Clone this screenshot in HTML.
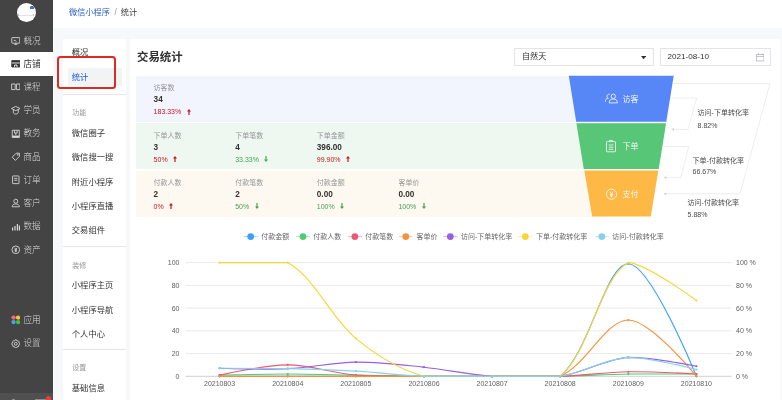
<!DOCTYPE html>
<html lang="zh-CN">
<head>
<meta charset="utf-8">
<title>统计</title>
<style>
*{box-sizing:border-box;margin:0;padding:0}
html,body{width:782px;height:400px;overflow:hidden;background:#f7f8fa;font-family:"Liberation Sans","Noto Sans CJK SC",sans-serif;color:#323233}
.abs,.sact,.sic,.stx,.mact,.mi,.mg,.mdiv,.row,.lab,.val,.pct{position:absolute}
#root{position:absolute;left:0;top:0;width:782px;height:400px;overflow:hidden;will-change:transform;transform:translateZ(0)}
#side{position:absolute;left:0;top:0;width:53px;height:400px;background:#444}
#sidebot{position:absolute;left:0;top:393px;width:53px;height:7px;background:#505050}
.logo{position:absolute;left:17.1px;top:3.1px;width:19px;height:19px;border-radius:50%;background:#fff;overflow:hidden}
.sact{left:0;width:53px;height:23.8px;background:#fff}
.sic{left:10.8px;width:9.6px;height:9.6px}
.stx{font-weight:300;left:23.5px;font-size:8.6px;line-height:14px;white-space:nowrap}
#head{position:absolute;left:53px;top:0;width:729px;height:27.5px;background:#fff}
.bc{position:absolute;top:6.2px;font-size:8.2px;line-height:14px;white-space:nowrap}
#sub{position:absolute;left:63px;top:38.5px;width:63px;height:362px;background:#fff}
#sub *{}
.mact{left:68px;width:54px;height:17.4px;background:#f2f3f5}
.mi{left:71.8px;font-size:8.3px;line-height:14px;white-space:nowrap;color:#323233}
.mg{left:72.3px;font-size:7px;line-height:12px;color:#969799;white-space:nowrap}
.mdiv{left:63px;width:63px;height:0.7px;background:#e6e7e9}
#main{position:absolute;left:130px;top:38.5px;width:649.5px;height:362px;background:#fff}
.title{position:absolute;left:137px;top:48.500px;font-size:11.4px;font-weight:bold;line-height:17px;color:#323233;white-space:nowrap}
.inp{position:absolute;top:48.300px;height:18px;border:1px solid #e2e4e7;background:#fff;font-size:8.1px;line-height:16.6px;color:#323233;white-space:nowrap}
.row{left:135.7px;width:470px;height:46px}
.lab{font-size:7px;line-height:10px;color:#969799;white-space:nowrap}
.val{font-size:8.2px;line-height:11px;font-weight:bold;color:#323233;white-space:nowrap}
.pct{font-size:7px;line-height:10px;white-space:nowrap}
.ar{margin-left:5.5px;vertical-align:-0.3px}
svg text.ax{font-size:7px;fill:#606060;font-family:"Liberation Sans",sans-serif}
svg text.lg{font-size:7px;fill:#686868;font-family:"Liberation Sans","Noto Sans CJK SC",sans-serif}
svg text.fl{font-size:8px;fill:#fff;fill-opacity:0.93;font-family:"Liberation Sans","Noto Sans CJK SC",sans-serif}
svg text.cv{font-size:7px;fill:#4a4a4a;font-family:"Liberation Sans","Noto Sans CJK SC",sans-serif}
#redbox{position:absolute;left:57px;top:56.2px;width:59.4px;height:32.6px;border:2.2px solid #df2a22;border-radius:3.5px}
</style>
</head>
<body>
<div id="root">
<div id="head">
  <div class="bc" style="left:16px;color:#2b62c9">微信小程序</div>
  <div class="bc" style="left:61.500px;color:#969799">/</div>
  <div class="bc" style="left:67.800px;color:#3a3a3c">统计</div>
</div>
<div id="side">
  <div class="logo"><div style="position:absolute;left:12.600px;top:2.800px;width:4.600px;height:2.800px;background:#3f6fcf;border-radius:1.200px 1.200px 0.500px 0.500px"></div><div style="position:absolute;left:1.500px;top:11.600px;width:15.500px;height:0.800px;background:#dfe4ee"></div><div style="position:absolute;left:1.200px;top:11.200px;width:1.200px;height:1.500px;background:#a9c0ea"></div><div style="position:absolute;left:16.200px;top:11.200px;width:1.200px;height:1.500px;background:#a9c0ea"></div></div>
  <svg class="sic" style="top:35.8px;color:#dadada" viewBox="0 0 12 12" fill="none" stroke="currentColor" stroke-width="1.1"><rect x="1" y="2" width="10" height="7" rx="0.6"/><path d="M4 11h4M6 9v2M3.5 5.5h2l1 1.5"/></svg>
<div class="stx" style="top:33.5px;color:#dadada">概况</div>
<div class="sact" style="top:51.8px"></div>
<svg class="sic" style="top:59.0px;color:#323233" viewBox="0 0 12 12" fill="none" stroke="currentColor" stroke-width="1.1"><path d="M1 2h10v8H1z" fill="currentColor"/><path d="M1 5h10" stroke="#fff"/><path d="M4.5 10V7.5h3V10" stroke="#fff"/></svg>
<div class="stx" style="top:56.7px;color:#323233;font-weight:400">店铺</div>
<svg class="sic" style="top:82.3px;color:#dadada" viewBox="0 0 12 12" fill="none" stroke="currentColor" stroke-width="1.1"><path d="M0.8 2.5h4.4v7H0.8zM6.8 2.5h4.4v7H6.8z"/></svg>
<div class="stx" style="top:80.0px;color:#dadada">课程</div>
<svg class="sic" style="top:105.3px;color:#dadada" viewBox="0 0 12 12" fill="none" stroke="currentColor" stroke-width="1.1"><path d="M6 1.800L11.400 4.400 6 7 0.600 4.400zM2.900 5.700v3.500c0 1.200 1.400 2.100 3.100 2.100s3.100-0.900 3.100-2.100V5.700"/></svg>
<div class="stx" style="top:103.0px;color:#dadada">学员</div>
<svg class="sic" style="top:128.7px;color:#dadada" viewBox="0 0 12 12" fill="none" stroke="currentColor" stroke-width="1.1"><path d="M1.600 1.600h8.800v9h-8.800zM4.300 1.600v3.400h3.400V1.600M6 5v2.500"/><path d="M1.600 9.200h8.800" stroke-width="2"/></svg>
<div class="stx" style="top:126.4px;color:#dadada">教务</div>
<svg class="sic" style="top:151.9px;color:#dadada" viewBox="0 0 12 12" fill="none" stroke="currentColor" stroke-width="1.1"><path d="M6.500 1.500h4v4L5.500 10.500 1.500 6.500z"/><circle cx="8.500" cy="3.500" r="0.600"/></svg>
<div class="stx" style="top:149.6px;color:#dadada">商品</div>
<svg class="sic" style="top:175.3px;color:#dadada" viewBox="0 0 12 12" fill="none" stroke="currentColor" stroke-width="1.1"><rect x="2" y="1.200" width="8" height="9.600" rx="0.500"/><path d="M4 4.200h4M4 6.500h4"/></svg>
<div class="stx" style="top:173.0px;color:#dadada">订单</div>
<svg class="sic" style="top:198.3px;color:#dadada" viewBox="0 0 12 12" fill="none" stroke="currentColor" stroke-width="1.1"><circle cx="6" cy="4" r="2.500"/><path d="M1.500 11c0-2.500 2-3.500 4.500-3.500s4.500 1 4.500 3.500z"/></svg>
<div class="stx" style="top:196.0px;color:#dadada">客户</div>
<svg class="sic" style="top:221.6px;color:#dadada" viewBox="0 0 12 12" fill="none" stroke="currentColor" stroke-width="1.1"><path d="M2 10.500V7M5 10.500V5M8 10.500V2.500M10.500 10.500V4.500" stroke-width="1.500"/></svg>
<div class="stx" style="top:219.3px;color:#dadada">数据</div>
<svg class="sic" style="top:244.8px;color:#dadada" viewBox="0 0 12 12" fill="none" stroke="currentColor" stroke-width="1.1"><circle cx="6" cy="6" r="4.800"/><path d="M4.500 3.500L6 5.500 7.500 3.500M6 5.500V9M4.500 6h3M4.500 7.500h3"/></svg>
<div class="stx" style="top:242.5px;color:#dadada">资产</div>
<svg class="sic" style="top:315.3px" viewBox="0 0 12 12"><circle cx="3.200" cy="3.200" r="2.700" fill="#f2687a"/><circle cx="8.800" cy="3.200" r="2.700" fill="#f7c43a"/><circle cx="3.200" cy="8.800" r="2.700" fill="#4fa2ea"/><circle cx="8.800" cy="8.800" r="2.700" fill="#3cc53f"/></svg>
<div class="stx" style="top:313.0px;color:#dadada">应用</div>
<svg class="sic" style="top:338.6px;color:#dadada" viewBox="0 0 12 12" fill="none" stroke="currentColor" stroke-width="1.1"><circle cx="6" cy="6" r="1.800"/><path d="M6 1l1.200 0.300 0.500 1.200 1.300-0.200 0.900 0.900-0.200 1.300 1.200 0.500L11 6l-0.300 1.200-1.200 0.500 0.200 1.300-0.900 0.900-1.300-0.200-0.500 1.200L6 11l-1.200-0.300-0.500-1.200-1.300 0.200-0.900-0.900 0.200-1.300-1.200-0.500L1 6l0.300-1.200 1.200-0.500-0.200-1.300 0.900-0.900 1.300 0.200 0.500-1.200z"/></svg>
<div class="stx" style="top:336.3px;color:#dadada">设置</div>
  <div id="sidebot"></div>
  <div style="position:absolute;left:11.500px;top:399px;width:3px;height:2px;border-radius:1px;background:#9a9a9a"></div>
  <div style="position:absolute;left:35px;top:398.800px;width:11px;height:2px;background:#8c8c8c"></div>
  <div style="position:absolute;left:45.500px;top:395.800px;width:5px;height:5px;border-radius:50%;background:#ee3b3b"></div>
</div>
<div id="sub"></div>
<div class="mi" style="top:45.0px">概况</div>
<div class="mact" style="top:68.3px"></div>
<div class="mi" style="top:70.0px;color:#155bd4">统计</div>
<div class="mg" style="top:107.0px">功能</div>
<div class="mi" style="top:125.5px">微信圈子</div>
<div class="mi" style="top:150.3px">微信搜一搜</div>
<div class="mi" style="top:174.5px">附近小程序</div>
<div class="mi" style="top:198.7px">小程序直播</div>
<div class="mi" style="top:223.0px">交易组件</div>
<div class="mg" style="top:260.0px">装修</div>
<div class="mi" style="top:278.0px">小程序主页</div>
<div class="mi" style="top:302.5px">小程序导航</div>
<div class="mi" style="top:327.0px">个人中心</div>
<div class="mg" style="top:362.0px">设置</div>
<div class="mi" style="top:381.0px">基础信息</div>
<div class="mdiv" style="top:93.7px"></div>
<div class="mdiv" style="top:246.3px"></div>
<div class="mdiv" style="top:349.3px"></div>
<div id="main"></div>
<div class="title">交易统计</div>
<div class="inp" style="left:514px;width:140px;padding-left:7px">自然天<svg style="position:absolute;right:6.800px;top:6.800px" width="5.200" height="3.400" viewBox="0 0 6 4"><path d="M0 0h6L3 4z" fill="#323233"/></svg></div>
<div class="inp" style="left:660px;width:110.800px;padding-left:6.500px">2021-08-10<svg style="position:absolute;right:5.400px;top:4px" width="8.600" height="8.600" viewBox="0 0 8 8" fill="none" stroke="#aeb0b3" stroke-width="0.700"><rect x="0.600" y="1.300" width="6.800" height="6.100"/><path d="M0.600 3.300h6.800M2.300 0.300v1.800M5.700 0.300v1.800"/></svg></div>
<div class="row" style="top:75.7px;background:#f2f5fe"></div>
<div class="lab" style="left:153.6px;top:83.3px">访客数</div>
<div class="val" style="left:153.6px;top:94.1px">34</div>
<div class="pct" style="left:153.6px;top:107.3px;color:#c8141c">183.33%<svg class="ar" width="4" height="6" viewBox="0 0 4 6"><path d="M2 0L4 2.4H2.600V6H1.400V2.400H0z" fill="#c8141c"/></svg></div>
<div class="row" style="top:123.2px;background:#eff8f0"></div>
<div class="lab" style="left:153.6px;top:130.8px">下单人数</div>
<div class="val" style="left:153.6px;top:141.6px">3</div>
<div class="pct" style="left:153.6px;top:154.8px;color:#c8141c">50%<svg class="ar" width="4" height="6" viewBox="0 0 4 6"><path d="M2 0L4 2.4H2.600V6H1.400V2.400H0z" fill="#c8141c"/></svg></div>
<div class="lab" style="left:235.2px;top:130.8px">下单笔数</div>
<div class="val" style="left:235.2px;top:141.6px">4</div>
<div class="pct" style="left:235.2px;top:154.8px;color:#46a158">33.33%<svg class="ar" width="4" height="6" viewBox="0 0 4 6"><path d="M2 6L4 3.600H2.600V0H1.400V3.600H0z" fill="#46a158"/></svg></div>
<div class="lab" style="left:316.8px;top:130.8px">下单金额</div>
<div class="val" style="left:316.8px;top:141.6px">396.00</div>
<div class="pct" style="left:316.8px;top:154.8px;color:#c8141c">99.90%<svg class="ar" width="4" height="6" viewBox="0 0 4 6"><path d="M2 0L4 2.4H2.600V6H1.400V2.400H0z" fill="#c8141c"/></svg></div>
<div class="row" style="top:170.6px;background:#fef9f0"></div>
<div class="lab" style="left:153.6px;top:178.2px">付款人数</div>
<div class="val" style="left:153.6px;top:189.0px">2</div>
<div class="pct" style="left:153.6px;top:202.2px;color:#c8141c">0%<svg class="ar" width="4" height="6" viewBox="0 0 4 6"><path d="M2 0L4 2.4H2.600V6H1.400V2.400H0z" fill="#c8141c"/></svg></div>
<div class="lab" style="left:235.2px;top:178.2px">付款笔数</div>
<div class="val" style="left:235.2px;top:189.0px">2</div>
<div class="pct" style="left:235.2px;top:202.2px;color:#46a158">50%<svg class="ar" width="4" height="6" viewBox="0 0 4 6"><path d="M2 6L4 3.600H2.600V0H1.400V3.600H0z" fill="#46a158"/></svg></div>
<div class="lab" style="left:316.8px;top:178.2px">付款金额</div>
<div class="val" style="left:316.8px;top:189.0px">0.00</div>
<div class="pct" style="left:316.8px;top:202.2px;color:#46a158">100%<svg class="ar" width="4" height="6" viewBox="0 0 4 6"><path d="M2 6L4 3.600H2.600V0H1.400V3.600H0z" fill="#46a158"/></svg></div>
<div class="lab" style="left:398.4px;top:178.2px">客单价</div>
<div class="val" style="left:398.4px;top:189.0px">0.00</div>
<div class="pct" style="left:398.4px;top:202.2px;color:#46a158">100%<svg class="ar" width="4" height="6" viewBox="0 0 4 6"><path d="M2 6L4 3.600H2.600V0H1.400V3.600H0z" fill="#46a158"/></svg></div>
<svg class="abs" style="left:0;top:0" width="782" height="400" viewBox="0 0 782 400">
<!-- funnel -->
<polygon points="568.8,75.700 673.700,75.700 666.300,121.800 576.200,121.800" fill="#5786f7"/>
<polygon points="576.400,123.200 666.100,123.200 658.700,169 583.800,169" fill="#57c676"/>
<polygon points="584.300,170.600 658.300,170.600 650.800,216.600 592.200,216.600" fill="#feb846"/>
<g fill="none" stroke="#fff" stroke-width="0.85" stroke-opacity="0.92">
  <circle cx="613.3" cy="96.3" r="2.2"/><path d="M609.2 102.900c0-2.700 1.600-3.900 4.100-3.900s4.100 1.200 4.100 3.900z"/>
  <path d="M609.700 94.200c-1.700-0.200-2.700 0.900-2.700 2.200 0 1.100 0.700 1.900 1.600 2.200M605.300 101.700c0-1.900 0.900-3 2.600-3.400"/>
  <rect x="606.500" y="141.600" width="9" height="10.200" rx="0.700"/><path d="M609.400 141.600v-1.200h3.200v1.200M608.700 145h4.600M608.700 147.200h4.600M608.700 149.300h4.600"/>
  <circle cx="611.500" cy="194.200" r="5.100"/><path d="M609.700 191.500l1.800 2.500 1.800-2.500M611.500 194v3.300M609.900 194.500h3.200M609.900 195.900h3.200"/>
</g>
<text x="622.500" y="101.500" class="fl">访客</text>
<text x="622.500" y="149.400" class="fl">下单</text>
<text x="622.500" y="197.100" class="fl">支付</text>
<!-- connectors -->
<g fill="none" stroke="#e3e5e8" stroke-width="0.700">
  <path d="M672.300 83.600H770L740 193.800H664"/>
  <path d="M670 98H696.600L688 129.400H672"/>
  <path d="M662.500 146.500H688.700L680.800 177.600H664.300"/>
</g>
<g fill="#d4d6d9">
  <path d="M663.300 193.800l3-1.400v2.800z"/><path d="M671 129.400l3-1.400v2.800z"/><path d="M663.300 177.600l3-1.400v2.800z"/>
</g>
<text x="697.600" y="115.200" class="cv">访问-下单转化率</text>
<text x="697.600" y="127.500" class="cv">8.82%</text>
<text x="692.600" y="162.600" class="cv">下单-付款转化率</text>
<text x="692.600" y="174.400" class="cv">66.67%</text>
<text x="687.600" y="205" class="cv">访问-付款转化率</text>
<text x="687.600" y="216.800" class="cv">5.88%</text>
<line x1="185.5" x2="731.5" y1="353.56" y2="353.56" stroke="#e5e5e5" stroke-width="0.8"/>
<line x1="185.5" x2="731.5" y1="330.82" y2="330.82" stroke="#e5e5e5" stroke-width="0.8"/>
<line x1="185.5" x2="731.5" y1="308.08" y2="308.08" stroke="#e5e5e5" stroke-width="0.8"/>
<line x1="185.5" x2="731.5" y1="285.34" y2="285.34" stroke="#e5e5e5" stroke-width="0.8"/>
<line x1="185.5" x2="731.5" y1="262.60" y2="262.60" stroke="#e5e5e5" stroke-width="0.8"/>
<line x1="185.5" x2="731.5" y1="376.30" y2="376.30" stroke="#c4c4c4" stroke-width="0.8"/>
<path d="M219.60 376.30 C219.60 376.30 265.24 376.30 287.72 376.30 C310.20 376.30 333.36 376.30 355.84 376.30 C378.32 376.30 401.48 376.30 423.96 376.30 C446.44 376.30 469.60 376.30 492.08 376.30 C514.56 376.30 544.86 376.30 560.20 376.30 C589.82 351.83 605.84 263.74 628.32 263.74 C650.80 263.74 696.44 376.30 696.44 376.30" fill="none" stroke="#3ba0ff" stroke-width="1.15" stroke-linejoin="round"/>
<circle cx="219.60" cy="376.30" r="1.1" fill="#3ba0ff"/>
<circle cx="287.72" cy="376.30" r="1.1" fill="#3ba0ff"/>
<circle cx="355.84" cy="376.30" r="1.1" fill="#3ba0ff"/>
<circle cx="423.96" cy="376.30" r="1.1" fill="#3ba0ff"/>
<circle cx="492.08" cy="376.30" r="1.1" fill="#3ba0ff"/>
<circle cx="560.20" cy="376.30" r="1.1" fill="#3ba0ff"/>
<circle cx="628.32" cy="263.74" r="1.1" fill="#3ba0ff"/>
<circle cx="696.44" cy="376.30" r="1.1" fill="#3ba0ff"/>
<path d="M219.60 375.16 C219.60 375.16 265.24 374.03 287.72 374.03 C310.20 374.03 333.36 374.79 355.84 375.16 C378.32 375.54 401.48 376.11 423.96 376.30 C446.44 376.30 469.60 376.30 492.08 376.30 C514.56 376.30 537.73 376.30 560.20 376.30 C582.69 375.92 605.83 374.40 628.32 374.03 C650.79 374.03 696.44 374.03 696.44 374.03" fill="none" stroke="#4ecb73" stroke-width="1.15" stroke-linejoin="round"/>
<circle cx="219.60" cy="375.16" r="1.1" fill="#4ecb73"/>
<circle cx="287.72" cy="374.03" r="1.1" fill="#4ecb73"/>
<circle cx="355.84" cy="375.16" r="1.1" fill="#4ecb73"/>
<circle cx="423.96" cy="376.30" r="1.1" fill="#4ecb73"/>
<circle cx="492.08" cy="376.30" r="1.1" fill="#4ecb73"/>
<circle cx="560.20" cy="376.30" r="1.1" fill="#4ecb73"/>
<circle cx="628.32" cy="374.03" r="1.1" fill="#4ecb73"/>
<circle cx="696.44" cy="374.03" r="1.1" fill="#4ecb73"/>
<path d="M219.60 375.16 C219.60 375.16 265.24 364.93 287.72 364.93 C310.20 364.93 333.24 373.28 355.84 375.16 C378.20 376.30 401.48 376.11 423.96 376.30 C446.44 376.30 469.60 376.30 492.08 376.30 C514.56 376.30 537.75 376.30 560.20 376.30 C582.70 375.55 605.82 372.13 628.32 371.75 C650.78 371.38 696.44 374.03 696.44 374.03" fill="none" stroke="#ea5b70" stroke-width="1.15" stroke-linejoin="round"/>
<circle cx="219.60" cy="375.16" r="1.1" fill="#ea5b70"/>
<circle cx="287.72" cy="364.93" r="1.1" fill="#ea5b70"/>
<circle cx="355.84" cy="375.16" r="1.1" fill="#ea5b70"/>
<circle cx="423.96" cy="376.30" r="1.1" fill="#ea5b70"/>
<circle cx="492.08" cy="376.30" r="1.1" fill="#ea5b70"/>
<circle cx="560.20" cy="376.30" r="1.1" fill="#ea5b70"/>
<circle cx="628.32" cy="371.75" r="1.1" fill="#ea5b70"/>
<circle cx="696.44" cy="374.03" r="1.1" fill="#ea5b70"/>
<path d="M219.60 376.30 C219.60 376.30 265.24 376.30 287.72 376.30 C310.20 376.30 333.36 376.30 355.84 376.30 C378.32 376.30 401.48 376.30 423.96 376.30 C446.44 376.30 469.60 376.30 492.08 376.30 C514.56 376.30 540.63 376.30 560.20 376.30 C585.59 365.81 605.84 320.02 628.32 320.02 C650.80 320.02 696.44 376.30 696.44 376.30" fill="none" stroke="#f7913d" stroke-width="1.15" stroke-linejoin="round"/>
<circle cx="219.60" cy="376.30" r="1.1" fill="#f7913d"/>
<circle cx="287.72" cy="376.30" r="1.1" fill="#f7913d"/>
<circle cx="355.84" cy="376.30" r="1.1" fill="#f7913d"/>
<circle cx="423.96" cy="376.30" r="1.1" fill="#f7913d"/>
<circle cx="492.08" cy="376.30" r="1.1" fill="#f7913d"/>
<circle cx="560.20" cy="376.30" r="1.1" fill="#f7913d"/>
<circle cx="628.32" cy="320.02" r="1.1" fill="#f7913d"/>
<circle cx="696.44" cy="376.30" r="1.1" fill="#f7913d"/>
<path d="M219.60 368.23 C219.60 368.23 265.29 369.69 287.72 368.68 C310.25 367.67 333.34 362.33 355.84 362.09 C378.30 361.84 401.55 364.87 423.96 367.20 C446.51 369.56 469.50 374.79 492.08 376.30 C514.46 376.30 538.14 376.30 560.20 376.30 C583.10 373.11 605.52 359.02 628.32 357.35 C650.48 357.35 696.44 366.27 696.44 366.27" fill="none" stroke="#975fe4" stroke-width="1.15" stroke-linejoin="round"/>
<circle cx="219.60" cy="368.23" r="1.1" fill="#975fe4"/>
<circle cx="287.72" cy="368.68" r="1.1" fill="#975fe4"/>
<circle cx="355.84" cy="362.09" r="1.1" fill="#975fe4"/>
<circle cx="423.96" cy="367.20" r="1.1" fill="#975fe4"/>
<circle cx="492.08" cy="376.30" r="1.1" fill="#975fe4"/>
<circle cx="560.20" cy="376.30" r="1.1" fill="#975fe4"/>
<circle cx="628.32" cy="357.35" r="1.1" fill="#975fe4"/>
<circle cx="696.44" cy="366.27" r="1.1" fill="#975fe4"/>
<path d="M219.60 262.60 C219.60 262.60 269.71 262.60 287.72 262.60 C314.67 277.59 330.37 317.14 355.84 338.40 C375.32 354.66 399.97 369.63 423.96 376.30 C444.93 376.30 469.60 376.30 492.08 376.30 C514.56 376.30 544.94 376.30 560.20 376.30 C589.90 351.52 600.01 278.35 628.32 262.60 C644.97 262.60 696.44 300.50 696.44 300.50" fill="none" stroke="#fbd437" stroke-width="1.15" stroke-linejoin="round"/>
<circle cx="219.60" cy="262.60" r="1.1" fill="#fbd437"/>
<circle cx="287.72" cy="262.60" r="1.1" fill="#fbd437"/>
<circle cx="355.84" cy="338.40" r="1.1" fill="#fbd437"/>
<circle cx="423.96" cy="376.30" r="1.1" fill="#fbd437"/>
<circle cx="492.08" cy="376.30" r="1.1" fill="#fbd437"/>
<circle cx="560.20" cy="376.30" r="1.1" fill="#fbd437"/>
<circle cx="628.32" cy="262.60" r="1.1" fill="#fbd437"/>
<circle cx="696.44" cy="300.50" r="1.1" fill="#fbd437"/>
<path d="M219.60 368.23 C219.60 368.23 265.25 368.19 287.72 368.68 C310.21 369.17 333.38 369.93 355.84 371.18 C378.34 372.44 401.45 375.45 423.96 376.30 C446.41 376.30 469.60 376.30 492.08 376.30 C514.56 376.30 538.14 376.30 560.20 376.30 C583.10 373.11 605.60 358.46 628.32 357.35 C650.56 357.35 696.44 369.61 696.44 369.61" fill="none" stroke="#87d1ea" stroke-width="1.15" stroke-linejoin="round"/>
<circle cx="219.60" cy="368.23" r="1.1" fill="#87d1ea"/>
<circle cx="287.72" cy="368.68" r="1.1" fill="#87d1ea"/>
<circle cx="355.84" cy="371.18" r="1.1" fill="#87d1ea"/>
<circle cx="423.96" cy="376.30" r="1.1" fill="#87d1ea"/>
<circle cx="492.08" cy="376.30" r="1.1" fill="#87d1ea"/>
<circle cx="560.20" cy="376.30" r="1.1" fill="#87d1ea"/>
<circle cx="628.32" cy="357.35" r="1.1" fill="#87d1ea"/>
<circle cx="696.44" cy="369.61" r="1.1" fill="#87d1ea"/>
<text x="179.5" y="378.80" text-anchor="end" class="ax">0</text>
<text x="736" y="378.80" text-anchor="start" class="ax">0 %</text>
<text x="179.5" y="356.06" text-anchor="end" class="ax">20</text>
<text x="736" y="356.06" text-anchor="start" class="ax">20 %</text>
<text x="179.5" y="333.32" text-anchor="end" class="ax">40</text>
<text x="736" y="333.32" text-anchor="start" class="ax">40 %</text>
<text x="179.5" y="310.58" text-anchor="end" class="ax">60</text>
<text x="736" y="310.58" text-anchor="start" class="ax">60 %</text>
<text x="179.5" y="287.84" text-anchor="end" class="ax">80</text>
<text x="736" y="287.84" text-anchor="start" class="ax">80 %</text>
<text x="179.5" y="265.10" text-anchor="end" class="ax">100</text>
<text x="736" y="265.10" text-anchor="start" class="ax">100 %</text>
<text x="219.60" y="386" text-anchor="middle" class="ax">20210803</text>
<text x="287.72" y="386" text-anchor="middle" class="ax">20210804</text>
<text x="355.84" y="386" text-anchor="middle" class="ax">20210805</text>
<text x="423.96" y="386" text-anchor="middle" class="ax">20210806</text>
<text x="492.08" y="386" text-anchor="middle" class="ax">20210807</text>
<text x="560.20" y="386" text-anchor="middle" class="ax">20210808</text>
<text x="628.32" y="386" text-anchor="middle" class="ax">20210809</text>
<text x="696.44" y="386" text-anchor="middle" class="ax">20210810</text>
<line x1="243.7" x2="257.7" y1="236.6" y2="236.6" stroke="#3ba0ff" stroke-width="1" opacity="0.45"/>
<circle cx="250.7" cy="236.6" r="3.4" fill="#3ba0ff"/>
<text x="261.2" y="239.2" class="lg">付款金额</text>
<line x1="296.0" x2="310.0" y1="236.6" y2="236.6" stroke="#4ecb73" stroke-width="1" opacity="0.45"/>
<circle cx="303.0" cy="236.6" r="3.4" fill="#4ecb73"/>
<text x="313.2" y="239.2" class="lg">付款人数</text>
<line x1="347.9" x2="361.9" y1="236.6" y2="236.6" stroke="#ea5b70" stroke-width="1" opacity="0.45"/>
<circle cx="354.9" cy="236.6" r="3.4" fill="#ea5b70"/>
<text x="365.2" y="239.2" class="lg">付款笔数</text>
<line x1="398.8" x2="412.8" y1="236.6" y2="236.6" stroke="#f7913d" stroke-width="1" opacity="0.45"/>
<circle cx="405.8" cy="236.6" r="3.4" fill="#f7913d"/>
<text x="416.6" y="239.2" class="lg">客单价</text>
<line x1="443.3" x2="457.3" y1="236.6" y2="236.6" stroke="#975fe4" stroke-width="1" opacity="0.45"/>
<circle cx="450.3" cy="236.6" r="3.4" fill="#975fe4"/>
<text x="461.0" y="239.2" class="lg">访问-下单转化率</text>
<line x1="518.3" x2="532.3" y1="236.6" y2="236.6" stroke="#fbd437" stroke-width="1" opacity="0.45"/>
<circle cx="525.3" cy="236.6" r="3.4" fill="#fbd437"/>
<text x="536.0" y="239.2" class="lg">下单-付款转化率</text>
<line x1="594.8" x2="608.8" y1="236.6" y2="236.6" stroke="#87d1ea" stroke-width="1" opacity="0.45"/>
<circle cx="601.8" cy="236.6" r="3.4" fill="#87d1ea"/>
<text x="612.3" y="239.2" class="lg">访问-付款转化率</text>
</svg>
<div id="redbox"></div>
</div>
</body>
</html>
